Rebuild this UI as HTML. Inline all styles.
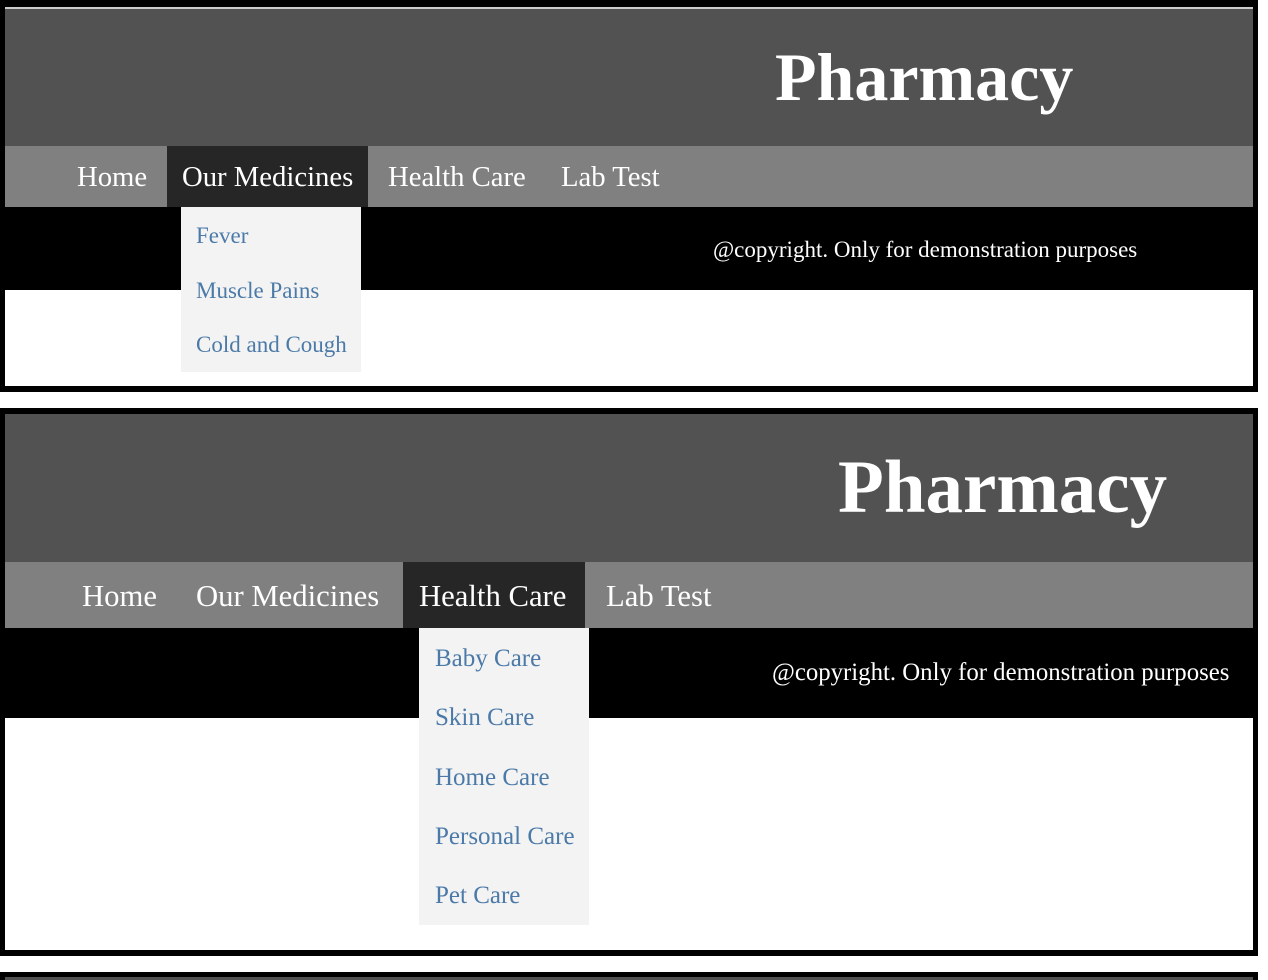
<!DOCTYPE html>
<html><head><meta charset="utf-8"><style>
*{margin:0;padding:0;box-sizing:border-box}
body{width:1268px;height:980px;background:#fff;position:relative;overflow:hidden;font-family:"Liberation Serif",serif}
.a{position:absolute}
.t{position:absolute;white-space:nowrap;line-height:1}
.w{color:#fff}
.l{color:#4b7aa8}
</style></head><body>
<!-- panel 1 -->
<div class="a" style="left:0;top:0;width:1258px;height:392px;background:#000"></div>
<div class="a" style="left:5px;top:7px;width:1248px;height:2px;background:#ccc"></div>
<div class="a" style="left:5px;top:9px;width:1248px;height:137px;background:#525252"></div>
<div class="a" style="left:5px;top:146px;width:1248px;height:61px;background:#808080"></div>
<div class="a" style="left:167px;top:146px;width:201px;height:61px;background:#262626"></div>
<div class="a" style="left:5px;top:207px;width:1248px;height:83px;background:#000"></div>
<div class="a" style="left:5px;top:290px;width:1248px;height:96px;background:#fff"></div>
<div class="a" style="left:181px;top:207px;width:180px;height:165px;background:#f3f3f3"></div>
<div class="t w" style="left:775px;top:43px;font-size:68px;font-weight:bold">Pharmacy</div>
<div class="t w" style="left:77px;top:163px;font-size:28.7px">Home</div>
<div class="t w" style="left:182px;top:163px;font-size:28.7px">Our Medicines</div>
<div class="t w" style="left:388px;top:163px;font-size:28.7px">Health Care</div>
<div class="t w" style="left:561px;top:163px;font-size:28.7px">Lab Test</div>
<div class="t w" style="left:713px;top:238px;font-size:23px">@copyright. Only for demonstration purposes</div>
<div class="t l" style="left:196px;top:224px;font-size:23px">Fever</div>
<div class="t l" style="left:196px;top:279px;font-size:23px">Muscle Pains</div>
<div class="t l" style="left:196px;top:333px;font-size:23px">Cold and Cough</div>
<!-- panel 2 -->
<div class="a" style="left:0;top:408px;width:1258px;height:548px;background:#000"></div>
<div class="a" style="left:5px;top:414px;width:1248px;height:148px;background:#525252"></div>
<div class="a" style="left:5px;top:562px;width:1248px;height:66px;background:#808080"></div>
<div class="a" style="left:403px;top:562px;width:182px;height:66px;background:#262626"></div>
<div class="a" style="left:5px;top:628px;width:1248px;height:90px;background:#000"></div>
<div class="a" style="left:5px;top:718px;width:1248px;height:232px;background:#fff"></div>
<div class="a" style="left:419px;top:628px;width:170px;height:297px;background:#f3f3f3"></div>
<div class="t w" style="left:838px;top:450px;font-size:75px;font-weight:bold">Pharmacy</div>
<div class="t w" style="left:82px;top:581px;font-size:30.7px">Home</div>
<div class="t w" style="left:196px;top:581px;font-size:30.7px">Our Medicines</div>
<div class="t w" style="left:419px;top:581px;font-size:30.7px">Health Care</div>
<div class="t w" style="left:606px;top:581px;font-size:30.7px">Lab Test</div>
<div class="t w" style="left:772px;top:661px;font-size:24.8px">@copyright. Only for demonstration purposes</div>
<div class="t l" style="left:435px;top:646px;font-size:25px">Baby Care</div>
<div class="t l" style="left:435px;top:705px;font-size:25px">Skin Care</div>
<div class="t l" style="left:435px;top:765px;font-size:25px">Home Care</div>
<div class="t l" style="left:435px;top:824px;font-size:25px">Personal Care</div>
<div class="t l" style="left:435px;top:883px;font-size:25px">Pet Care</div>
<!-- panel 3 -->
<div class="a" style="left:0;top:972px;width:1258px;height:8px;background:#000"></div>
<div class="a" style="left:5px;top:977px;width:1248px;height:3px;background:#525252"></div>
</body></html>
